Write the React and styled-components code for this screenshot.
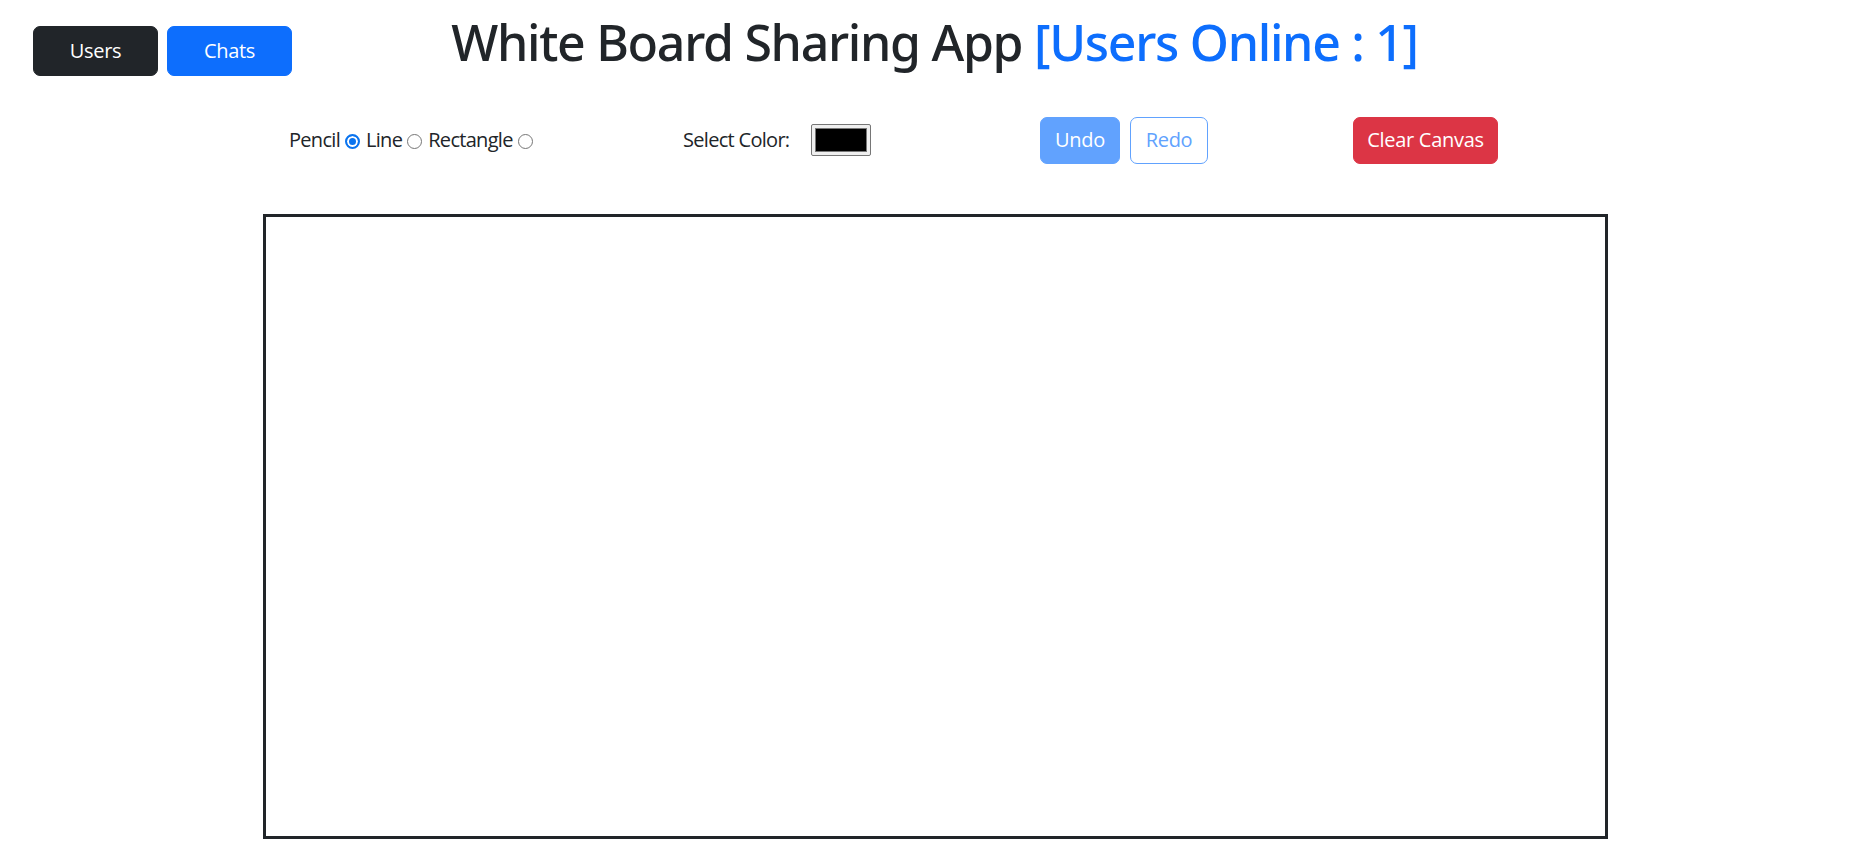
import React, { useState } from "react";
import styled, { createGlobalStyle } from "styled-components";

const GlobalStyle = createGlobalStyle`
  html, body {
    margin: 0;
    padding: 0;
    background: #ffffff;
  }
  body {
    font-family: "Segoe UI", "Open Sans", "Noto Sans", sans-serif;
    color: #212529;
    font-size: 20px;
    line-height: 1.5;
  }
  * { box-sizing: border-box; }
`;

const Page = styled.div`
  width: 1861px;
  min-height: 855px;
  display: flex;
  flex-direction: column;
`;

const Header = styled.header`
  display: grid;
  grid-template-columns: 1fr auto 1fr;
  align-items: start;
  padding-top: 12px;
`;

const SideButtons = styled.div`
  display: flex;
  gap: 9px;
  margin: 14px 0 0 33px;
`;

const Btn = styled.button`
  font-family: inherit;
  font-size: 20px;
  line-height: 30px;
  font-weight: 400;
  letter-spacing: -0.3px;
  height: ${(p) => p.$h || 47}px;
  width: ${(p) => p.$w}px;
  padding: 0;
  border-radius: 7px;
  border: 1px solid ${(p) => p.$border || p.$bg};
  background: ${(p) => p.$bg};
  color: ${(p) => p.$color};
  display: inline-flex;
  align-items: center;
  justify-content: center;
  cursor: pointer;
`;

const Title = styled.h1`
  margin: 0;
  font-family: "Noto Sans", "Open Sans", sans-serif;
  font-size: 50px;
  line-height: 60px;
  font-weight: 500;
  color: #212529;
  letter-spacing: -1.3px;
  white-space: nowrap;
  transform: translateX(4px);
`;

const Online = styled.span`
  color: #0d6efd;
`;

const Toolbar = styled.div`
  display: grid;
  grid-template-columns: 394px 357px 313px auto;
  align-items: center;
  height: 48px;
  margin-top: 40px;
  padding-left: 289px;
`;

const ToolGroup = styled.div`
  display: flex;
  align-items: center;
  gap: ${(p) => p.$gap || 0}px;
`;

const Label = styled.label`
  font-size: 20px;
  line-height: 30px;
  letter-spacing: -0.7px;
  color: #212529;
`;

const Radio = styled.input.attrs({ type: "radio" })`
  appearance: none;
  -webkit-appearance: none;
  width: 15px;
  height: 15px;
  margin: 2px 6px 0 5px;
  border-radius: 50%;
  border: 1px solid #767676;
  background: #fff;
  flex: none;
  &:checked {
    border: 2px solid #0b74ef;
    background: #0b74ef;
    box-shadow: inset 0 0 0 2px #fff;
  }
`;

const ColorInput = styled.input.attrs({ type: "color" })`
  appearance: none;
  -webkit-appearance: none;
  width: 60px;
  height: 32px;
  padding: 3px;
  border: 1px solid #767676;
  border-radius: 2px;
  background: #efefef;
  cursor: pointer;
  &::-webkit-color-swatch-wrapper {
    padding: 0;
  }
  &::-webkit-color-swatch {
    border: 1px solid #777;
    border-radius: 0;
  }
`;

const CanvasWrap = styled.div`
  margin-top: 50px;
  padding-left: 263px;
`;

const Board = styled.div`
  width: 1345px;
  height: 625px;
  border: 3px solid #212529;
  background: #fff;
`;

export default function App() {
  const [tool, setTool] = useState("pencil");
  const [color, setColor] = useState("#000000");
  return (
    <Page>
      <GlobalStyle />
      <Header>
        <SideButtons>
          <Btn $w={125} $h={50} $bg="#212529" $color="#fff">Users</Btn>
          <Btn $w={125} $h={50} $bg="#0d6efd" $color="#fff">Chats</Btn>
        </SideButtons>
        <Title>
          White Board Sharing App <Online>[Users Online : 1]</Online>
        </Title>
        <div />
      </Header>

      <Toolbar>
        <ToolGroup>
          <Label htmlFor="pencil">Pencil</Label>
          <Radio id="pencil" name="tool" checked={tool === "pencil"} onChange={() => setTool("pencil")} />
          <Label htmlFor="line">Line</Label>
          <Radio id="line" name="tool" checked={tool === "line"} onChange={() => setTool("line")} />
          <Label htmlFor="rect">Rectangle</Label>
          <Radio id="rect" name="tool" checked={tool === "rect"} onChange={() => setTool("rect")} />
        </ToolGroup>
        <ToolGroup $gap={22}>
          <Label htmlFor="color">Select Color:</Label>
          <ColorInput id="color" value={color} onChange={(e) => setColor(e.target.value)} />
        </ToolGroup>
        <ToolGroup $gap={10}>
          <Btn $w={80} $bg="#61a2fe" $color="#fff">Undo</Btn>
          <Btn $w={78} $bg="#fff" $border="#61a2fe" $color="#61a2fe">Redo</Btn>
        </ToolGroup>
        <ToolGroup>
          <Btn $w={145} $bg="#dc3545" $color="#fff">Clear Canvas</Btn>
        </ToolGroup>
      </Toolbar>

      <CanvasWrap>
        <Board />
      </CanvasWrap>
    </Page>
  );
}
